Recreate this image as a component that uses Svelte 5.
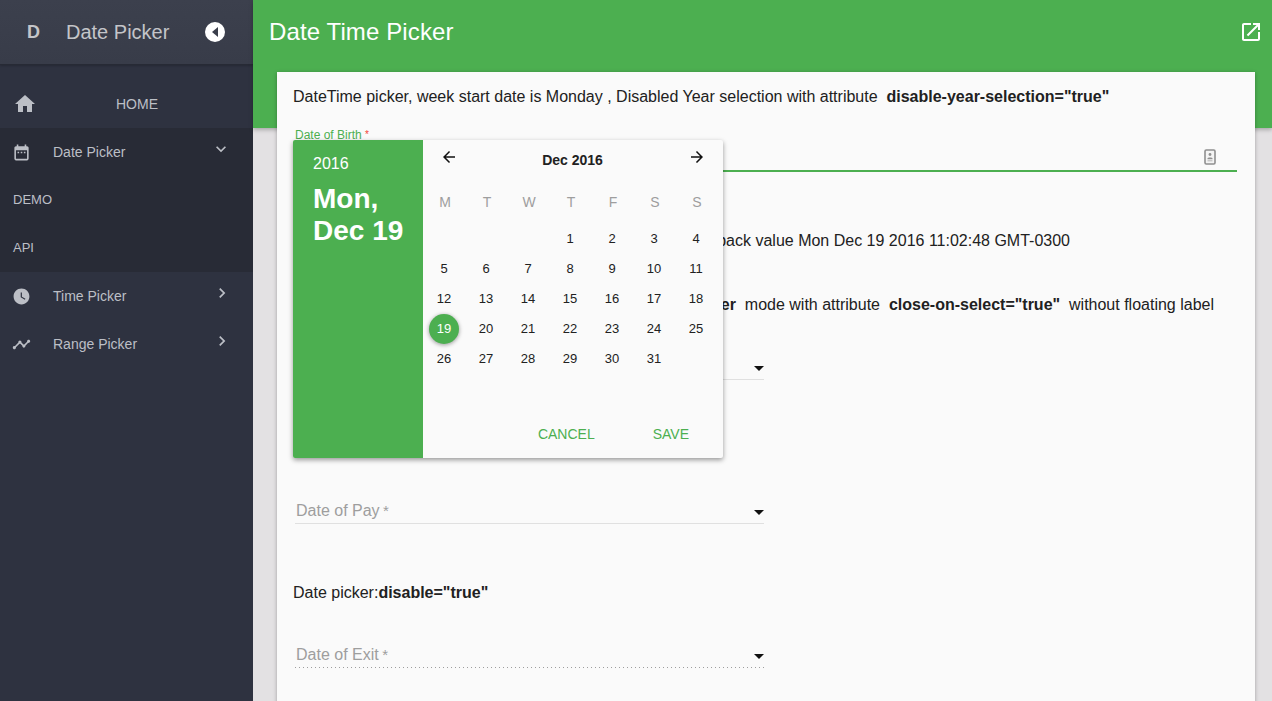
<script>
  const icons = {
    home: 'M10 20v-6h4v6h5v-8h3L12 3 2 12h3v8z',
    cal: 'M9 11H7v2h2v-2zm4 0h-2v2h2v-2zm4 0h-2v2h2v-2zm2-7h-1V2h-2v2H8V2H6v2H5c-1.11 0-1.99.9-1.99 2L3 20c0 1.1.89 2 2 2h14c1.1 0 2-.9 2-2V6c0-1.1-.9-2-2-2zm0 16H5V9h14v11z',
    clock: 'M12 2C6.5 2 2 6.5 2 12s4.5 10 10 10 10-4.5 10-10S17.5 2 12 2zm4.2 14.2L11 13V7h1.5v5.2l4.5 2.7-.8 1.3z',
    chart: 'M23 8c0 1.1-.9 2-2 2-.18 0-.35-.02-.51-.07l-3.56 3.55c.05.16.07.34.07.52 0 1.1-.9 2-2 2s-2-.9-2-2c0-.18.02-.36.07-.52l-2.55-2.55c-.16.05-.34.07-.52.07s-.36-.02-.52-.07l-4.55 4.56c.05.16.07.33.07.51 0 1.1-.9 2-2 2s-2-.9-2-2 .9-2 2-2c.18 0 .35.02.51.07l4.56-4.55C8.02 9.36 8 9.18 8 9c0-1.1.9-2 2-2s2 .9 2 2c0 .18-.02.36-.07.52l2.55 2.55c.16-.05.34-.07.52-.07s.36.02.52.07l3.55-3.56C19.02 8.35 19 8.18 19 8c0-1.1.9-2 2-2s2 .9 2 2z',
    down: 'M7.41 8.59L12 13.17l4.59-4.58L18 10l-6 6-6-6z',
    right: 'M8.59 16.59L13.17 12 8.59 7.41 10 6l6 6-6 6z',
    open: 'M19 19H5V5h7V3H5c-1.11 0-2 .9-2 2v14c0 1.1.89 2 2 2h14c1.1 0 2-.9 2-2v-7h-2v7zM14 3v2h3.59l-9.83 9.83 1.41 1.41L19 6.41V10h2V3h-7z',
    back: 'M20 11H7.83l5.59-5.59L12 4l-8 8 8 8 1.41-1.41L7.83 13H20v-2z',
    fwd: 'M12 4l-1.41 1.41L16.17 11H4v2h12.17l-5.58 5.59L12 20l8-8z'
  };
  const days = ['M','T','W','T','F','S','S'];
  const cells = [...Array(3).fill(0), ...Array.from({length:31},(_,i)=>i+1)];
</script>

<div class="page">
  <aside class="side">
    <div class="brand">
      <span class="letter">D</span>
      <span class="brandname">Date Picker</span>
      <span class="collapse"><i></i></span>
    </div>
    <nav class="nav">
      <div class="item home">
        <svg class="home-ic" viewBox="0 0 24 24"><path d={icons.home}/></svg>
        <span class="homelabel">HOME</span>
      </div>
      <div class="group">
        <div class="item">
          <svg class="ic" viewBox="0 0 24 24"><path d={icons.cal}/></svg>
          <span class="lbl">Date Picker</span>
          <svg class="chev open-chev" viewBox="0 0 24 24"><path d={icons.down}/></svg>
        </div>
        <div class="sub">DEMO</div>
        <div class="sub">API</div>
      </div>
      <div class="item">
        <svg class="ic" viewBox="0 0 24 24"><path d={icons.clock}/></svg>
        <span class="lbl">Time Picker</span>
        <svg class="chev" viewBox="0 0 24 24"><path d={icons.right}/></svg>
      </div>
      <div class="item">
        <svg class="ic" viewBox="0 0 24 24"><path d={icons.chart}/></svg>
        <span class="lbl">Range Picker</span>
        <svg class="chev" viewBox="0 0 24 24"><path d={icons.right}/></svg>
      </div>
    </nav>
  </aside>

  <main class="main">
    <header class="bar">
      <h1>Date Time Picker</h1>
      <svg class="openic" viewBox="0 0 24 24"><path d={icons.open}/></svg>
    </header>
    <section class="card">
      <p class="line first">DateTime picker, week start date is Monday , Disabled Year selection with attribute &nbsp;<b>disable-year-selection="true"</b></p>
      <div class="field">
        <span class="floatlabel">Date of Birth <em>*</em></span>
        <div class="underline">
          <svg class="contact" viewBox="0 0 12 16">
            <rect x="1" y="1" width="10" height="14" rx="1.2" />
            <circle cx="6" cy="5.5" r="1.4" />
            <path class="bust" d="M3.5 9.5c0-1.2 5-1.2 5 0v.7h-5z" />
            <path class="rule" d="M3.5 11.8h5" />
          </svg>
        </div>
      </div>
      <p class="tail cb">back value Mon Dec 19 2016 11:02:48 GMT-0300</p>
      <p class="tail mode"><b>er</b> &nbsp;mode with attribute &nbsp;<b>close-on-select="true"</b> &nbsp;without floating label</p>
      <div class="select first-select"><i class="caret"></i></div>
      <div class="select pay"><span class="ph">Date of Pay <em>*</em></span><i class="caret"></i></div>
      <p class="line dis">Date picker:<b>disable="true"</b></p>
      <div class="select exit"><span class="ph">Date of Exit <em>*</em></span><i class="caret"></i></div>

      <div class="picker">
        <div class="pleft">
          <div class="pyear">2016</div>
          <div class="pdate">Mon,<br />Dec 19</div>
        </div>
        <div class="pright">
          <div class="phead">
            <svg class="arrow" viewBox="0 0 24 24"><path d={icons.back}/></svg>
            <span class="month">Dec 2016</span>
            <svg class="arrow" viewBox="0 0 24 24"><path d={icons.fwd}/></svg>
          </div>
          <div class="grid wk">
            {#each days as d}<span>{d}</span>{/each}
          </div>
          <div class="grid dates">
            {#each cells as c}
              <span class:sel={c === 19}>{c || ''}</span>
            {/each}
          </div>
          <div class="actions"><span>CANCEL</span><span>SAVE</span></div>
        </div>
      </div>
    </section>
  </main>
</div>

<style>
  :global(body) { margin: 0; overflow: hidden; background: #e3e1e3; font-family: "Liberation Sans", Arial, sans-serif; }
  .page { display: flex; height: 701px; overflow: hidden; }
  .side { width: 253px; flex: none; background: #2e3240; color: #bcbfc6; display: flex; flex-direction: column; }
  .brand { height: 64px; background: linear-gradient(#3c404d, #383c49); border-bottom: 1px solid #272a35; box-shadow: 0 1px 2px rgba(0,0,0,.2); display: flex; align-items: center; font-size: 20px; color: #c4c5c9; }
  .letter { width: 66px; box-sizing: border-box; padding-left: 27px; font-weight: 700; font-size: 18px; }
  .brandname { flex: 1; }
  .collapse { width: 20px; height: 20px; border-radius: 50%; background: #fff; margin-right: 28px; display: flex; align-items: center; justify-content: center; }
  .collapse i { border: 5px solid transparent; border-right: 6px solid #3a3e4b; border-left: 0; margin-right: 1px; }
  .nav { padding-top: 15px; }
  .item { height: 48px; display: flex; align-items: center; font-size: 14px; }
  .ic { width: 19px; height: 19px; fill: #bcbfc6; margin-left: 12px; flex: none; }
  .home-ic { width: 24px; height: 24px; fill: #bcbfc6; margin-left: 13px; flex: none; }
  .homelabel { flex: 1; text-align: center; margin-left: -8px; padding-right: 8px; }
  .lbl { margin-left: 22px; flex: 1; }
  .chev { width: 20px; height: 20px; fill: #bcbfc6; margin-right: 21px; margin-top: -7px; }
  .open-chev { margin-right: 22px; }
  .group { background: #282b36; }
  .sub { height: 48px; line-height: 48px; padding-left: 13px; font-size: 13px; }
  .main { flex: 1; min-width: 0; position: relative; }
  .bar { height: 128px; background: #4caf50; color: #fff; display: flex; justify-content: space-between; padding: 0 9px 0 16px; box-sizing: border-box; box-shadow: 0 2px 4px rgba(0,0,0,.25); }
  h1 { margin: 0; font-size: 24px; font-weight: 400; line-height: 63px; letter-spacing: .12px; }
  .openic { width: 24px; height: 24px; fill: #fff; margin-top: 20px; }
  .card { position: relative; margin: -56px 17px 0 24px; height: 800px; background: #fafafa; box-shadow: 0 1px 4px rgba(0,0,0,.3); padding: 0 18px 0 16px; color: #212121; font-size: 16px; }
  .line { margin: 0; line-height: 24px; white-space: nowrap; }
  .first { padding-top: 13px; }
  .field { margin-top: 19px; position: relative; }
  .floatlabel { display: block; font-size: 12px; color: #4caf50; line-height: 14px; padding-left: 2px; }
  .floatlabel em { color: #f44336; font-style: normal; font-size: 10px; vertical-align: 1px; }
  .underline { height: 28px; border-bottom: 2px solid #4caf50; display: flex; justify-content: flex-end; align-items: center; padding-right: 21px; }
  .contact { width: 12px; height: 16px; margin-top: 1px; }
  .contact rect { fill: #f4f4f4; stroke: #8f8f8f; stroke-width: 1.6; }
  .contact circle, .contact .bust { fill: #8f8f8f; }
  .contact .rule { stroke: #b5b5b5; stroke-width: 1; fill: none; }
  .tail { margin: 0; text-align: right; line-height: 24px; white-space: nowrap; }
  .cb { margin-top: 57px; margin-left: 424px; width: 353px; }
  .mode { margin-top: 40px; margin-left: 424px; width: 497px; }
  .select { width: 469px; margin-left: 2px; height: 28px; display: flex; justify-content: space-between; align-items: center; border-bottom: 1px solid #e0e0e0; padding: 0 0 0 1px; box-sizing: border-box; }
  .first-select { margin-top: 35px; justify-content: flex-end; }
  .pay { margin-top: 116px; }
  .exit { margin-top: 35px; border-bottom: 0; padding-bottom: 1px; background: linear-gradient(to right, #9e9e9e 25%, transparent 25%) left bottom / 4px 1px repeat-x; }
  .ph { color: #9e9e9e; font-size: 16px; margin-top: 2px; }
  .ph em { font-style: normal; font-size: 15px; margin-left: -1px; }
  .caret { width: 0; height: 0; border: 5.5px solid transparent; border-top: 5px solid #111; border-bottom: 0; margin-top: 5px; }
  .dis { margin-top: 57px; }
  .picker { position: absolute; left: 16px; top: 68px; width: 430px; height: 318px; display: flex; background: #fafafa; border-radius: 2px; overflow: hidden; box-shadow: 0 2px 5px rgba(0,0,0,.4); }
  .pleft { width: 130px; background: #4caf50; color: #fff; padding: 14px 0 0 20px; box-sizing: border-box; }
  .pyear { font-size: 16px; line-height: 20px; }
  .pdate { font-size: 28px; font-weight: 700; line-height: 32px; margin-top: 9px; }
  .pright { flex: 1; display: flex; flex-direction: column; }
  .phead { display: flex; justify-content: space-between; align-items: flex-start; padding: 8px 17px 0 17px; height: 41px; box-sizing: border-box; }
  .arrow { width: 18px; height: 18px; fill: #111; }
  .month { font-size: 14px; font-weight: 700; color: #212121; margin-top: 4px; margin-right: 1px; }
  .grid { display: grid; grid-template-columns: repeat(7, 42px); }
  .grid span { text-align: center; }
  .wk { height: 41px; margin-bottom: 2px; margin-left: 1px; align-items: center; color: #9e9e9e; font-size: 14px; }
  .dates { grid-auto-rows: 30px; font-size: 13px; color: #212121; }
  .dates span { line-height: 30px; margin: 0 6px; border-radius: 50%; height: 30px; }
  .dates .sel { background: #4caf50; color: #fff; box-shadow: 0 1px 4px rgba(0,0,0,.4); }
  .actions { margin-top: auto; display: flex; justify-content: flex-end; gap: 58px; padding: 0 34px 15px 0; color: #4caf50; font-size: 14px; line-height: 18px; }
</style>
